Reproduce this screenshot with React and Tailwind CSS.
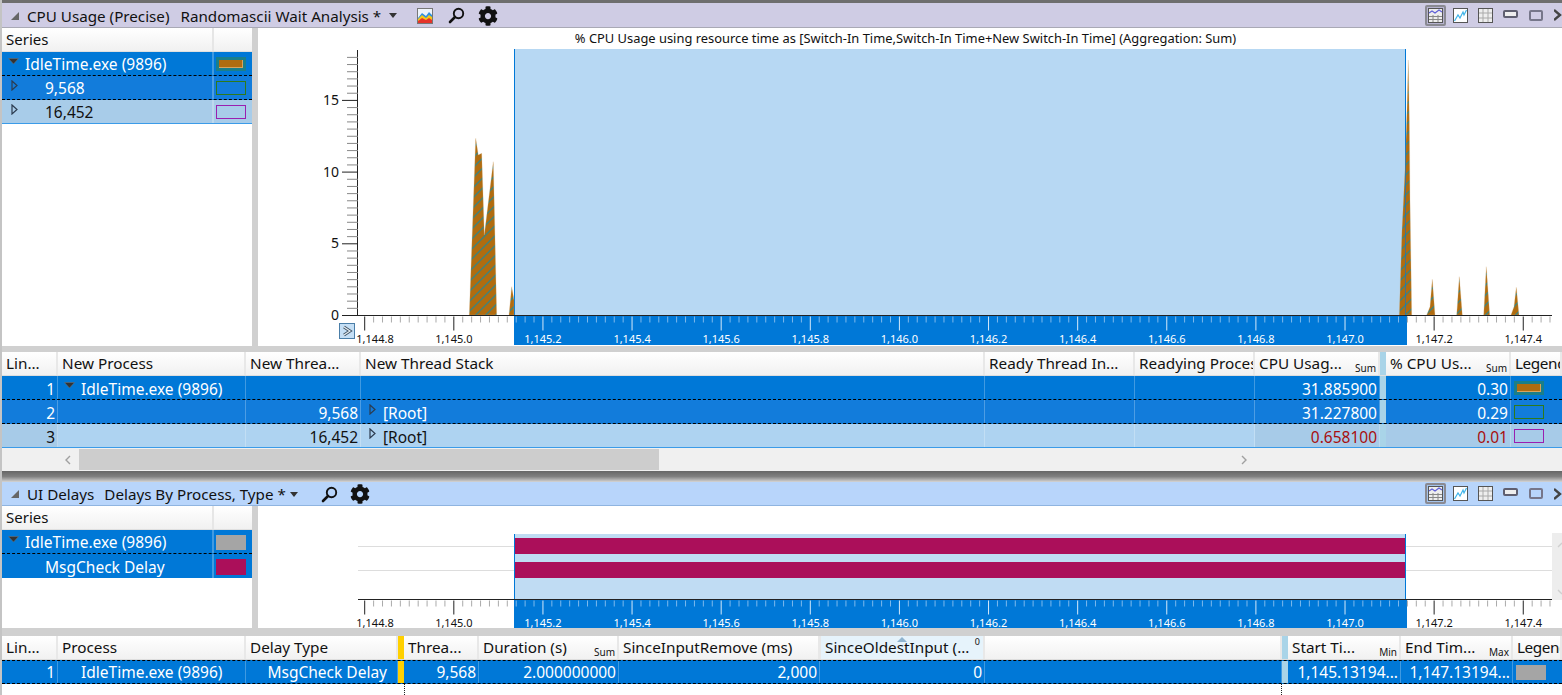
import { FaCog } from 'react-icons/fa';

const TICK = 8.912;
const X0 = 364.7;
const xTicks = Array.from({ length: 134 }, (_, i) => X0 + i * TICK);
const xLabels = ['1,144.8', '1,145.0', '1,145.2', '1,145.4', '1,145.6', '1,145.8', '1,146.0', '1,146.2', '1,146.4', '1,146.6', '1,146.8', '1,147.0', '1,147.2', '1,147.4'];

const XAxis = ({ y, bottom }) => (
  <g>
    <rect x="514" y={y} width="893" height={bottom - y} fill="#0078d7" />
    <line x1="358" x2="1552" y1={y} y2={y} stroke="#222" />
    {xTicks.map((x, i) => {
      const major = i % 10 === 0;
      const inBand = x > 514 && x < 1407;
      const color = inBand ? (major ? '#d5e9fa' : '#7db9ec') : major ? '#222' : '#aaa';
      return <line key={i} x1={x} x2={x} y1={y + 1} y2={y + (major ? 15 : 7)} stroke={color} />;
    })}
    {xLabels.map((label, i) => {
      const x = i === 0 ? 375 : X0 + i * 89.12;
      const inBand = x > 514 && x < 1407;
      return (
        <text key={label} x={x} y={y + 27} textAnchor="middle" fill={inBand ? '#fff' : '#111'} className="text-[11px]">
          {label}
        </text>
      );
    })}
  </g>
);

const spikes = [
  '469.3,315 475.7,138.3 478.3,155 481.7,153.3 484.3,235 493.3,161.7 496.7,315',
  '509,315 511.7,286.7 514,300 514,315',
  '1399.3,315 1402,230 1405,170 1407,110 1408.3,60 1409.3,120 1410,200 1411.7,315',
  '1426.7,315 1430,306.7 1432.3,279.3 1435,315',
  '1456.7,315 1459.3,276.7 1462.3,315',
  '1483.7,315 1486.3,266.7 1489.7,315',
  '1511,315 1514,306.7 1516.3,287.3 1519,315',
];

const CpuChart = () => (
  <svg viewBox="258 49 1304 297" className="block w-[1304px] h-[297px]">
    <defs>
      <pattern id="hatch" width="7.07" height="7.07" patternUnits="userSpaceOnUse" patternTransform="rotate(45)">
        <rect width="7.07" height="7.07" fill="#b06c10" />
        <rect width="1.1" height="7.07" fill="#1c8a9c" />
      </pattern>
    </defs>
    <rect x="514" y="49" width="892" height="266" fill="#b7d8f3" />
    <line x1="514.5" x2="514.5" y1="49" y2="316" stroke="#0078d7" />
    <line x1="1405.5" x2="1405.5" y1="49" y2="316" stroke="#0078d7" />
    {spikes.map((p) => (
      <polygon key={p} points={p} fill="url(#hatch)" stroke="#d9b582" strokeOpacity="0.5" strokeWidth="0.5" />
    ))}
    <line x1="1405.5" x2="1405.5" y1="60" y2="316" stroke="#0078d7" strokeOpacity="0.6" />
    <XAxis y={315.5} bottom={345} />
    <line x1="357.5" x2="357.5" y1="50" y2="316" stroke="#222" />
    {Array.from({ length: 37 }, (_, i) => {
      const y = 315.5 - i * 7.17;
      const major = i % 10 === 0;
      return <line key={i} x1={major ? 342 : 347} x2="358" y1={y} y2={y} stroke={major ? '#222' : '#888'} />;
    })}
    {[['0', 315], ['5', 243], ['10', 172], ['15', 100]].map(([t, y]) => (
      <text key={t} x="339" y={y + 5} textAnchor="end" fill="#111" className="text-[14px]">
        {t}
      </text>
    ))}
    <rect x="339.5" y="323.5" width="15" height="15" fill="#c5dff5" stroke="#4a7ea8" />
    <path d="M344 327 L350 331 L344 335" fill="none" stroke="#3e5263" strokeWidth="3" />
    <path d="M344 327 L350 331 L344 335" fill="none" stroke="#e8eef3" strokeWidth="1.2" />
  </svg>
);

const DelayChart = () => (
  <svg viewBox="258 506 1304 122" className="block w-[1304px] h-[122px]">
    <line x1="358" x2="1552" y1="546.5" y2="546.5" stroke="#ddd" />
    <line x1="358" x2="1552" y1="570.5" y2="570.5" stroke="#ddd" />
    <rect x="514" y="534" width="892" height="66" fill="#c0dcf3" />
    <line x1="514.5" x2="514.5" y1="534" y2="600" stroke="#0078d7" />
    <line x1="1405.5" x2="1405.5" y1="534" y2="600" stroke="#0078d7" />
    <rect x="515" y="538" width="890" height="16" fill="#ab0f5a" />
    <rect x="515" y="562" width="890" height="16" fill="#ab0f5a" />
    <rect x="1552" y="533" width="10" height="67" fill="#ededed" />
    <path d="M1558 547 L1562 543 M1558 590 L1562 594" fill="none" stroke="#cfcfcf" strokeWidth="1.4" />
    <XAxis y={599.5} bottom={628} />
  </svg>
);

const Collapse = () => (
  <svg width="8" height="8" viewBox="0 0 8 8" className="shrink-0">
    <path d="M8 0 V8 H0 Z" fill="#666" />
  </svg>
);

const DropArrow = ({ className }) => (
  <svg width="8" height="5" viewBox="0 0 8 5" className={className}>
    <path d="M0 0 H8 L4 5 Z" fill="#333" />
  </svg>
);

const ExpandedTri = ({ className }) => (
  <svg width="11" height="7" viewBox="0 0 11 7" className={`shrink-0 ${className}`}>
    <path d="M0.5 0.5 H10.5 L5.5 6 Z" fill="#333" stroke="#777" strokeWidth="0.5" />
  </svg>
);

const CollapsedTri = ({ className }) => (
  <svg width="7" height="11" viewBox="0 0 7 11" className={`shrink-0 ${className}`}>
    <path d="M1 1 L6 5.5 L1 10 Z" fill="none" stroke="#2c3c50" strokeWidth="1.2" />
  </svg>
);

const ColorChart = ({ className }) => (
  <svg width="16" height="16" viewBox="0 0 16 16" className={className}>
    <rect x="0.5" y="0.5" width="15" height="15" fill="#eef4fa" stroke="#777" />
    <path d="M1 15 V10 L5 5 L9 8 L12 4 L15 7 V15 Z" fill="#2d8fe0" />
    <path d="M1 15 V11 L5 7 L9 10 L12 7 L15 9 V15 Z" fill="#f6c716" />
    <path d="M1 15 V13 L5 10 L9 12 L12 10 L15 12 V15 Z" fill="#e5332a" />
  </svg>
);

const Magnifier = ({ className }) => (
  <svg width="17" height="17" viewBox="0 0 17 17" className={className}>
    <circle cx="10.5" cy="6.5" r="4.7" fill="none" stroke="#111" strokeWidth="1.9" />
    <path d="M7 10 L2 15" stroke="#111" strokeWidth="2.6" strokeLinecap="round" />
  </svg>
);

const GridChartIcon = () => (
  <svg width="15" height="15" viewBox="0 0 15 15">
    <rect x="0.5" y="0.5" width="14" height="14" fill="#eee" stroke="#555" />
    <path d="M1 8.5 H14 M1 11.5 H14 M5 7 V14 M10 7 V14" stroke="#888" />
    <path d="M1 5 L4 3 L7 5 L11 2 L14 4" fill="none" stroke="#6060d8" strokeWidth="1.2" />
  </svg>
);

const LineIcon = () => (
  <svg width="15" height="15" viewBox="0 0 15 15">
    <rect x="0.5" y="0.5" width="14" height="14" fill="#fff" stroke="#555" />
    <path d="M1.5 13 L5 7 L7 10 L10 4 L11 7 L13.5 2" fill="none" stroke="#3fb4ea" strokeWidth="1.2" />
  </svg>
);

const TableIcon = () => (
  <svg width="15" height="15" viewBox="0 0 15 15">
    <rect x="0.5" y="0.5" width="14" height="14" fill="#eee" stroke="#555" />
    <path d="M5 1 V14 M10 1 V14 M1 5 H14 M1 10 H14" stroke="#aaa" />
  </svg>
);

const WindowButtons = () => (
  <div className="flex items-center ml-[10px]">
    <div className="w-[15px] h-[8px] border-2 border-[#5f5f70] bg-[#eee] rounded-[2px] mb-[3px]" />
    <div className="w-[14px] h-[11px] border-2 border-[#76768a] rounded-[2px] ml-[11px]" />
    <svg width="8" height="12" viewBox="0 0 8 12" className="ml-[11px] shrink-0">
      <path d="M0 1 L6 6 L0 11" fill="none" stroke="#444" strokeWidth="2.4" />
    </svg>
  </div>
);

const ViewButtons = ({ selectedBg }) => (
  <div className="flex items-center w-[137px] shrink-0">
    <div className={`w-[21px] h-[21px] flex items-center justify-center border-2 border-[#8a8a92] rounded-[2px] ${selectedBg}`}>
      <GridChartIcon />
    </div>
    <div className="ml-[7px]">
      <LineIcon />
    </div>
    <div className="ml-[10px]">
      <TableIcon />
    </div>
    <WindowButtons />
  </div>
);

const PanelHeader = ({ height, bg, border, selectedBg, children }) => (
  <div className={`flex items-center border-b ${height} ${bg} ${border}`}>
    <div className="pl-[9px] pt-[1px] flex items-center flex-1 min-w-0 text-[15.2px] text-[#111]">
      <Collapse />
      {children}
    </div>
    <ViewButtons selectedBg={selectedBg} />
  </div>
);

const Swatch = ({ kind }) => {
  if (kind === 'brown')
    return (
      <div className="w-[30px] h-[14px] border-2 border-[#1a7f8a] bg-[#1a7f8a] p-px">
        <div className="w-full h-full bg-[#b06c10] border-r border-b border-[#d7a35e]" />
      </div>
    );
  if (kind === 'green') return <div className="w-[30px] h-[14px] border border-[#2f7a1a]" />;
  if (kind === 'purple') return <div className="w-[30px] h-[14px] border border-[#9a1fb0]" />;
  if (kind === 'gray') return <div className="w-[30px] h-[15px] bg-[#a5a5a5]" />;
  return <div className="w-[30px] h-[16px] bg-[#ab0f5a]" />;
};

const SeriesHeader = () => (
  <div className="h-[24px] flex bg-gradient-to-b from-white to-[#f1f1f1] border-b border-[#e0e0e0] text-[15px] text-[#111]">
    <div className="w-[212px] pl-[4px] flex items-center border-r-2 border-[#e6e6e6]">Series</div>
    <div className="flex-1" />
  </div>
);

const SeriesRow = ({ rowClass, textClass, swatch, children }) => (
  <div className={`h-[24px] flex items-center ${rowClass} ${textClass} text-[15.5px]`}>
    <div className="w-[212px] h-full flex items-center border-r-2 border-[#ffffff40]">{children}</div>
    <div className="flex-1 pl-[2px] pt-[1px] flex items-center">
      <Swatch kind={swatch} />
    </div>
  </div>
);

const dashed = 'border-b border-dashed border-black';

const SeriesPanel = ({ children }) => <div className="w-[250px] shrink-0 h-full">{children}</div>;

const Splitter = () => <div className="w-[6px] shrink-0 h-full bg-[#d0d0d0]" />;

const HeadCell = ({ className, sub, children }) => (
  <div className={`h-full shrink-0 relative pl-[4px] flex items-center overflow-hidden whitespace-nowrap border-r-2 border-[#e8e8e8] ${className}`}>
    {children}
    {sub && <span className="absolute right-[2px] bottom-[1px] text-[10px] leading-[12px]">{sub}</span>}
  </div>
);

const Cell = ({ className, right, children }) => (
  <div className={`h-full shrink-0 flex items-center whitespace-nowrap border-r border-[#ffffff40] ${right ? 'justify-end pr-[2px]' : 'pl-[4px]'} ${className}`}>
    {children}
  </div>
);

const Bar = ({ className }) => <div className={`w-[6px] h-full shrink-0 ${className}`} />;

const TableHeader = ({ children }) => (
  <div className="h-[24px] flex bg-gradient-to-b from-white to-[#f1f1f1] border-b border-[#dedede] text-[15.3px] text-[#111]">
    {children}
  </div>
);

const CpuRow = ({ rowClass, textClass, sumClass, valueClass, line, process, thread, root, cpu, pct, swatch }) => (
  <div className={`h-[24px] flex text-[15.5px] leading-[26px] ${rowClass} ${textClass}`}>
    <Cell right className={`w-[56px] pt-[2px] ${sumClass}`}>{line}</Cell>
    <Cell className="w-[188px] pt-[2px]">{process}</Cell>
    <Cell right className="w-[115px] pt-[2px]">{thread}</Cell>
    <Cell className="w-[624px] pt-[2px]">
      {root && <CollapsedTri className="ml-[4px] mb-[6px]" />}
      {root && <span className="ml-[7px]">[Root]</span>}
    </Cell>
    <Cell className="w-[150px]" />
    <Cell className="w-[120px]" />
    <Cell right className={`w-[125px] pt-[2px] ${sumClass} ${valueClass}`}>{cpu}</Cell>
    <Bar className="bg-[#a9d4e8]" />
    <Cell right className={`w-[125px] pt-[2px] ${sumClass} ${valueClass}`}>{pct}</Cell>
    <div className={`flex-1 pl-[3px] pt-[1px] flex items-center ${sumClass}`}>
      <Swatch kind={swatch} />
    </div>
  </div>
);

const rowOne = `bg-[#0078d7] ${dashed}`;
const rowTwo = `bg-[#127cdb] ${dashed}`;
const rowThree = 'bg-[#aed3f1] border-b border-[#3b9be8]';

const CpuTable = () => (
  <div>
    <TableHeader>
      <HeadCell className="w-[56px]">Lin...</HeadCell>
      <HeadCell className="w-[188px]">New Process</HeadCell>
      <HeadCell className="w-[115px]">New Threa...</HeadCell>
      <HeadCell className="w-[624px]">New Thread Stack</HeadCell>
      <HeadCell className="w-[150px]">Ready Thread In...</HeadCell>
      <HeadCell className="w-[120px]">Readying Process</HeadCell>
      <HeadCell className="w-[125px]" sub="Sum">CPU Usag...</HeadCell>
      <Bar className="bg-[#a9d4e8]" />
      <HeadCell className="w-[125px]" sub="Sum">% CPU Us...</HeadCell>
      <HeadCell className="flex-1 border-r-0 tracking-[-0.4px]">Legend</HeadCell>
    </TableHeader>
    <CpuRow
      rowClass={rowOne}
      textClass="text-white"
      sumClass=""
      valueClass=""
      line="1"
      process={
        <span className="flex items-center">
          <ExpandedTri className="ml-[2px] mb-[6px]" />
          <span className="ml-[6px]">IdleTime.exe (9896)</span>
        </span>
      }
      cpu="31.885900"
      pct="0.30"
      swatch="brown"
    />
    <CpuRow rowClass={rowTwo} textClass="text-white" sumClass="" valueClass="" line="2" thread="9,568" root cpu="31.227800" pct="0.29" swatch="green" />
    <CpuRow rowClass={rowThree} textClass="text-[#111]" sumClass="bg-[#a7cbe8]" valueClass="text-[#a80f0f]" line="3" thread="16,452" root cpu="0.658100" pct="0.01" swatch="purple" />
  </div>
);

const ScrollChevron = ({ flip, className }) => (
  <svg width="6" height="10" viewBox="0 0 6 10" className={`shrink-0 ${className}`}>
    <path d={flip ? 'M5 1 L1 5 L5 9' : 'M1 1 L5 5 L1 9'} fill="none" stroke="#a0a0a0" strokeWidth="1.4" />
  </svg>
);

const Scrollbar = () => (
  <div className="h-[23px] flex items-center bg-[#f0f0f0]">
    <ScrollChevron flip className="ml-[63px]" />
    <div className="w-[580px] h-[21px] bg-[#cdcdcd] ml-[8px]" />
    <ScrollChevron className="ml-[582px]" />
  </div>
);

const DelayTable = () => (
  <div>
    <TableHeader>
      <HeadCell className="w-[56px]">Lin...</HeadCell>
      <HeadCell className="w-[188px]">Process</HeadCell>
      <HeadCell className="w-[152px]">Delay Type</HeadCell>
      <Bar className="bg-[#ffd000]" />
      <HeadCell className="w-[75px]">Threa...</HeadCell>
      <HeadCell className="w-[140px]" sub="Sum">Duration (s)</HeadCell>
      <HeadCell className="w-[201px]">SinceInputRemove (ms)</HeadCell>
      <HeadCell className="w-[165px] bg-[#e6f3fb] border-x border-[#c5e3f5]">
        SinceOldestInput (...
        <svg width="10" height="5" viewBox="0 0 10 5" className="absolute left-[76px] top-[1px]">
          <path d="M5 0 L10 5 H0 Z" fill="#8fb4cf" />
        </svg>
        <span className="absolute right-[3px] top-[0px] text-[9px] leading-[11px]">0</span>
      </HeadCell>
      <HeadCell className="w-[297px]" />
      <Bar className="bg-[#a9d4e8]" />
      <HeadCell className="w-[113px]" sub="Min">Start Ti...</HeadCell>
      <HeadCell className="w-[112px]" sub="Max">End Tim...</HeadCell>
      <HeadCell className="flex-1 border-r-0 tracking-[-0.4px]">Legend</HeadCell>
    </TableHeader>
    <div className="h-[24px] flex text-[15.5px] text-white bg-[#0078d7] border-y border-dashed border-black">
      <Cell right className="w-[56px] pt-[1px]">1</Cell>
      <Cell className="w-[188px] pl-[23px] pt-[1px]">IdleTime.exe (9896)</Cell>
      <Cell right className="w-[152px] pr-[10px] pt-[1px]">MsgCheck Delay</Cell>
      <Bar className="bg-[#ffd000]" />
      <Cell right className="w-[75px] pt-[1px]">9,568</Cell>
      <Cell right className="w-[140px] pt-[1px]">2.000000000</Cell>
      <Cell right className="w-[201px] pt-[1px]">2,000</Cell>
      <Cell right className="w-[165px] pt-[1px]">0</Cell>
      <Cell className="w-[297px]" />
      <Bar className="bg-[#a9d4e8]" />
      <Cell right className="w-[113px] pt-[1px]">1,145.13194...</Cell>
      <Cell right className="w-[112px] pt-[1px]">1,147.13194...</Cell>
      <div className="flex-1 pl-[3px] flex items-center">
        <Swatch kind="gray" />
      </div>
    </div>
    <div className="h-[11px] flex">
      <div className="w-[403px] border-r border-dotted border-[#222]" />
      <div className="w-[877px] border-r border-dotted border-[#222]" />
    </div>
  </div>
);

export default function App() {
  return (
    <div className="w-[1562px] h-[695px] overflow-hidden bg-white font-['Noto_Sans',sans-serif] border-l-2 border-[#c4c4c4]">
      <div className="h-[3px] bg-[#6e6e6e]" />
      <PanelHeader height="h-[25px]" bg="bg-[#cfcce4]" border="border-[#a9a9b5]" selectedBg="bg-[#b6b3cf]">
        <span className="ml-[8px] pt-[1px]">CPU Usage (Precise)</span>
        <span className="ml-[11px] pt-[1px]">Randomascii Wait Analysis *</span>
        <DropArrow className="ml-[8px]" />
        <ColorChart className="ml-[20px]" />
        <Magnifier className="ml-[15px]" />
        <FaCog className="ml-[13px] text-[20px] text-[#111]" />
      </PanelHeader>
      <div className="h-[318px] flex">
        <SeriesPanel>
          <SeriesHeader />
          <SeriesRow rowClass={rowOne} textClass="text-white" swatch="brown">
            <ExpandedTri className="ml-[6px] mb-[4px]" />
            <span className="ml-[6px] pt-[3px]">IdleTime.exe (9896)</span>
          </SeriesRow>
          <SeriesRow rowClass={rowTwo} textClass="text-white" swatch="green">
            <CollapsedTri className="ml-[9px] mb-[4px]" />
            <span className="ml-[27px] pt-[2px]">9,568</span>
          </SeriesRow>
          <SeriesRow rowClass="bg-[#a8cce9] border-b border-[#3b9be8]" textClass="text-[#111]" swatch="purple">
            <CollapsedTri className="ml-[9px] mb-[4px]" />
            <span className="ml-[27px] pt-[2px]">16,452</span>
          </SeriesRow>
        </SeriesPanel>
        <Splitter />
        <div className="flex-1 min-w-0 flex flex-col">
          <div className="h-[21px] shrink-0 flex items-center justify-center pr-[9px] text-[12.9px] text-[#111] whitespace-nowrap">
            % CPU Usage using resource time as [Switch-In Time,Switch-In Time+New Switch-In Time] (Aggregation: Sum)
          </div>
          <CpuChart />
        </div>
      </div>
      <div className="h-[6px] bg-[#d0d0d0]" />
      <CpuTable />
      <Scrollbar />
      <div className="h-[11px] bg-gradient-to-b from-[#666666] via-[#808080] to-[#d5d5d5]" />
      <PanelHeader height="h-[24px]" bg="bg-[#b8d5fb]" border="border-[#8fb4e0]" selectedBg="bg-[#a3c2ea]">
        <span className="ml-[8px]">UI Delays</span>
        <span className="ml-[10px]">Delays By Process, Type *</span>
        <DropArrow className="ml-[4px]" />
        <Magnifier className="ml-[23px]" />
        <FaCog className="ml-[12px] text-[20px] text-[#111]" />
      </PanelHeader>
      <div className="h-[122px] flex">
        <SeriesPanel>
          <SeriesHeader />
          <SeriesRow rowClass={rowOne} textClass="text-white" swatch="gray">
            <ExpandedTri className="ml-[6px] mb-[4px]" />
            <span className="ml-[6px] pt-[3px]">IdleTime.exe (9896)</span>
          </SeriesRow>
          <SeriesRow rowClass="bg-[#0078d7]" textClass="text-white" swatch="magenta">
            <span className="ml-[43px] pt-[3px]">MsgCheck Delay</span>
          </SeriesRow>
        </SeriesPanel>
        <Splitter />
        <div className="flex-1 min-w-0">
          <DelayChart />
        </div>
      </div>
      <div className="h-[8px] bg-[#d0d0d0]" />
      <DelayTable />
    </div>
  );
}
